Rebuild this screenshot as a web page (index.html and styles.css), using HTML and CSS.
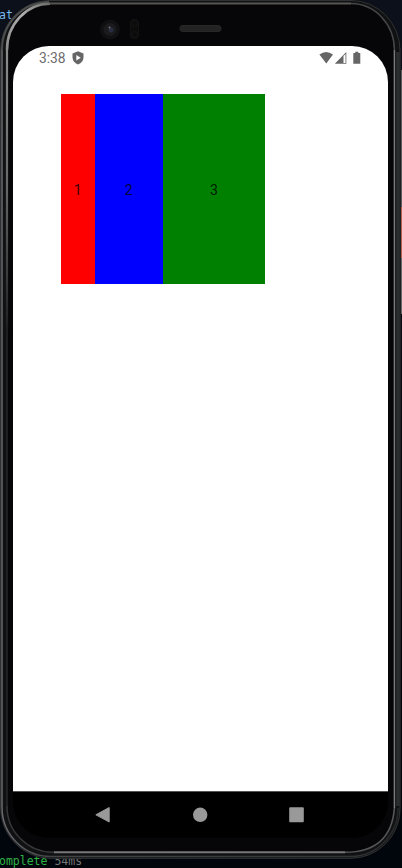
FILE: index.html
```html
<!DOCTYPE html>
<html lang="en">
<head>
<meta charset="utf-8">
<title>Emulator</title>
<link rel="stylesheet" href="styles.css">
</head>
<body>
<main class="desktop">
  <span class="terminal terminal-top">at</span>
  <div class="terminal terminal-bottom"><span class="done">omplete</span> 54ms</div>
  <svg class="frame" width="402" height="868" viewBox="0 0 402 868" fill="none">
    <defs>
      <linearGradient id="outer" x1="0" y1="0" x2="402" y2="0" gradientUnits="userSpaceOnUse">
        <stop offset="0" stop-color="#6c6c71"/><stop offset=".12" stop-color="#444547"/><stop offset=".85" stop-color="#343536"/><stop offset="1" stop-color="#242728"/>
      </linearGradient>
      <linearGradient id="side" x1="0" y1="50" x2="0" y2="330" gradientUnits="userSpaceOnUse">
        <stop offset="0" stop-color="#8c8c8c"/><stop offset=".5" stop-color="#666"/><stop offset="1" stop-color="#1f1f22"/>
      </linearGradient>
      <linearGradient id="corner" x1="8" y1="50" x2="60" y2="4" gradientUnits="userSpaceOnUse">
        <stop offset="0" stop-color="#8c8c8c"/><stop offset=".5" stop-color="#b0b0b0"/><stop offset="1" stop-color="#585955"/>
      </linearGradient>
    </defs>
    <path d="M48 0H351A50 50 0 0 1 401 50V808A50 50 0 0 1 351 858.500H51A51 51 0 0 1 0 807V50A49 50 0 0 1 48 0Z" fill="#101112"/>
    <path d="M48 .5H351A49 50 0 0 1 400 50V808A49 50 0 0 1 351 858.300H51A50 51 0 0 1 .5 807V50A49 50 0 0 1 48 .5Z" stroke="#303132"/>
    <path d="M48 3.500H351Q389 5 394.300 50V808Q390 852.300 343 852.300H54Q9 850 7 806V50Q9 6 48 3.500Z" fill="#060507"/>
    <path d="M2 50V807A49 49 0 0 0 51 856.500H351A48 48 0 0 0 398 808" stroke="url(#outer)" stroke-width="1.500"/>
    <path d="M2 50A47 48 0 0 1 49 2" stroke="#4b4c4e" stroke-width="2"/>
    <path d="M7 50V330" stroke="url(#side)" stroke-width="2.200"/>
    <path d="M7 330V806" stroke="#1f1f22" stroke-width="2"/>
    <path d="M7 50A43 46 0 0 1 50 3.800" stroke="url(#corner)" stroke-width="2.600"/>
    <path d="M50 3.500H351" stroke="#555652" stroke-width="2.200"/>
    <path d="M351 3.500A43.500 46.500 0 0 1 394.400 50" stroke="#454647" stroke-width="1.500"/>
    <path d="M394.400 50V808" stroke="#77797a" stroke-width="1.500"/>
    <path d="M394.400 808Q391 852.300 345 852.300" stroke="#555657" stroke-width="1.600"/>
    <path d="M345 852.300H54" stroke="#777" stroke-width="2"/>
    <path d="M54 852.300A46 46 0 0 1 7 806" stroke="#37373a" stroke-width="1.500"/>
    <path d="M398 52V806" stroke="#2b2e2f" stroke-width="3.600"/>
    <path d="M401.500 70V207" stroke="#5a5c5d"/>
    <path d="M401.500 207V258" stroke="#b9604f"/>
    <path d="M401.500 258V314" stroke="#66686a"/>
    <circle cx="110" cy="29.500" r="10" fill="#101012"/>
    <circle cx="110" cy="29.500" r="6.500" fill="#1b1b1e"/>
    <circle cx="111" cy="30" r="2.500" fill="#282d42"/>
    <circle cx="109.500" cy="27.500" r="1" fill="#77717c"/>
    <rect x="130.500" y="19" width="8" height="20" rx="4" fill="#0b0b0c" stroke="#111112"/>
    <circle cx="134.500" cy="23.500" r="3" stroke="#151516"/>
    <circle cx="134.500" cy="34.500" r="3" stroke="#151516"/>
    <rect x="180" y="25.500" width="41" height="6" rx="2.500" fill="#232323" stroke="#282828"/>
  </svg>
  <section class="screen">
    <header class="status">
      <time>3:38</time>
      <svg class="shield" width="12" height="14" viewBox="0 0 12 14"><path d="M6 .3L11.500 2.500V6.500Q11.200 11.500 6 13.500Q.8 11.500.5 6.500V2.500Z" fill="#666"/><path d="M4.300 4V9.400L8.700 6.700Z" fill="#fff"/></svg>
      <svg class="signals" width="43" height="14" viewBox="0 0 43 14"><path d="M.4 3.500Q7 -1.500 14 3.500L7.300 12.500Z" fill="#666"/><path d="M15.800 12.700L27.300 1V12.700Z" fill="#666"/><path d="M24.500 5L26.500 3V12H24.500Z" fill="#fff"/><path d="M34.300 2H36.300V.8H39.300V2H41.300V12.700H34.300Z" fill="#666"/></svg>
    </header>
    <div class="content">
      <div class="row">
        <div class="box red">1</div>
        <div class="box blue">2</div>
        <div class="box green">3</div>
      </div>
    </div>
    <nav class="navbar">
      <svg width="16" height="18" viewBox="0 0 16 18"><path d="M14.200 1.500V16L.8 8.800Z" fill="#999" stroke="#999" stroke-linejoin="round"/></svg>
      <svg width="16" height="18" viewBox="0 0 16 18"><circle cx="8.200" cy="8.800" r="7.200" fill="#999"/></svg>
      <svg width="16" height="18" viewBox="0 0 16 18"><rect x=".2" y="1.300" width="14.600" height="15" rx="1" fill="#999"/></svg>
    </nav>
  </section>
</main>
</body>
</html>
```
FILE: styles.css
```css
* { box-sizing: border-box; }
body { margin: 0; background: #01050c; font-family: Roboto, sans-serif; }
.desktop {
  position: relative;
  width: 402px;
  height: 868px;
  padding: 46px 14px 30px 13px;
  overflow: hidden;
  background: linear-gradient(#0b101b 0, #0b101b 150px, #01050c 700px);
}
.frame { position: absolute; left: 0; top: 0; }
.terminal { position: absolute; font: 12px/14px "DejaVu Sans Mono", monospace; white-space: pre; color: #777; }
.terminal-top { left: -1px; top: 8px; font-size: 11.5px; color: #79b8ec; }
.terminal-bottom { left: -1px; top: 854px; font-size: 11.5px; }
.done { color: #2fb344; }
.screen {
  position: relative;
  display: flex;
  flex-direction: column;
  width: 375px;
  height: 792px;
  overflow: hidden;
  border-radius: 36px;
}
.status { display: flex; align-items: center; height: 24px; padding: 0 26px; background: #fff; color: #6c6c6c; font-size: 13.8px; }
.shield { margin-left: 6px; }
.signals { margin-left: auto; }
.content { flex: 1; padding: 23.7px 47.7px; background: #fff; }
.row { display: flex; width: 204.3px; height: 190.8px; }
.box { display: flex; align-items: center; justify-content: center; padding-top: 2px; font-size: 14px; color: rgba(0, 0, 0, .8); }
.red { flex: 1; background: #f00; }
.blue { flex: 2; background: #00f; }
.green { flex: 3; background: #008000; }
.navbar { display: flex; justify-content: space-between; height: 47px; padding: 15px 83px 0 82px; border-top: 1px solid #555; background: #000; }
.navbar svg { margin-top: -1px; }
```
